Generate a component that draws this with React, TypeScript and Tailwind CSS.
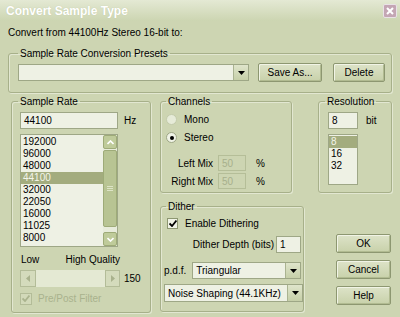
import React from "react";

const font = { fontFamily: '"Liberation Sans", Arial, sans-serif' };

function Btn({ label, className = "" }: { label: string; className?: string }) {
  return (
    <div
      className={`flex items-center justify-center rounded-[2px] border border-[#8d9771] bg-gradient-to-b from-[#dde3c8] to-[#c8d1aa] text-[10px] text-black shadow-[inset_1px_1px_0_#f1f4e6,inset_-1px_-1px_0_#b1bb91] ${className}`}
    >
      {label}
    </div>
  );
}

function DropArrow() {
  return (
    <div className="flex h-full w-[15px] items-center justify-center border-l border-[#aab391] bg-gradient-to-b from-[#dfe5cb] to-[#c6cfa8]">
      <svg width="7" height="4" viewBox="0 0 7 4">
        <path d="M0 0h7L3.5 4z" fill="#000" />
      </svg>
    </div>
  );
}

function Combo({ value, className = "" }: { value: string; className?: string }) {
  return (
    <div className={`flex items-stretch border border-[#9ea786] bg-[#eef1e4] ${className}`}>
      <div className="flex flex-1 items-center pl-[3px] text-[10px]">{value}</div>
      <DropArrow />
    </div>
  );
}

function Field({ value, className = "", disabled = false }: { value: string; className?: string; disabled?: boolean }) {
  return (
    <div
      className={`flex items-center pl-[3px] text-[10px] border ${
        disabled
          ? "border-[#b5be98] bg-[#cdd5b2] text-[#a7b08c]"
          : "border-[#9ea786] bg-[#eef1e4] text-black"
      } ${className}`}
    >
      {value}
    </div>
  );
}

function Group({
  title,
  className = "",
  legendClass = "ml-[6px]",
  innerClass = "",
  children,
}: {
  title: string;
  className?: string;
  legendClass?: string;
  innerClass?: string;
  children?: React.ReactNode;
}) {
  return (
    <fieldset
      className={`rounded-[3px] border border-[#a7b08a] shadow-[inset_1px_1px_0_#e2e7d1,1px_1px_0_#e2e7d1] ${className}`}
    >
      <legend className={`px-[2px] text-[10px] leading-[13px] ${legendClass}`}>{title}</legend>
      <div className={innerClass}>{children}</div>
    </fieldset>
  );
}

function Chevron({ up }: { up?: boolean }) {
  return (
    <div className="flex h-[14px] w-[14px] items-center justify-center rounded-[2px] border border-[#9eab78] bg-[#bfcb9a]">
      <svg width="7" height="5" viewBox="0 0 7 5">
        <path
          d={up ? "M0.5 4L3.5 1L6.5 4" : "M0.5 1L3.5 4L6.5 1"}
          stroke="#fff"
          strokeWidth="1.6"
          fill="none"
        />
      </svg>
    </div>
  );
}

export default function App() {
  const rates = ["192000", "96000", "48000", "44100", "32000", "22050", "16000", "11025", "8000"];
  return (
    <div className="flex h-[317px] w-[400px] flex-col overflow-hidden bg-[#cdd5b2] text-black" style={font}>
      {/* title bar */}
      <div className="flex h-[21px] items-center justify-between bg-gradient-to-b from-[#e4e9d4] to-[#ccd5b1] pl-[6px] pr-[3px]">
        <span className="text-[12px] font-bold text-white [text-shadow:0_0_1px_#b9c29e]">Convert Sample Type</span>
        <div className="flex h-[14px] w-[14px] items-center justify-center rounded-[2px] border border-[#e9e2e6] bg-[#c4a6b4]">
          <svg width="8" height="8" viewBox="0 0 8 8">
            <path d="M1 1L7 7M7 1L1 7" stroke="#fff" strokeWidth="2" />
          </svg>
        </div>
      </div>

      <div className="ml-[8px] mt-[6px] text-[10px] leading-[12px]">Convert from 44100Hz Stereo 16-bit to:</div>

      {/* presets */}
      <Group
        title="Sample Rate Conversion Presets"
        className="ml-[8px] mt-[8px] h-[46px] w-[384px]"
        legendClass="ml-[9px]"
        innerClass="pl-[9px]"
      >
        <div className="mt-[3px] flex items-center">
          <Combo value="" className="h-[17px] w-[231px]" />
          <Btn label="Save As..." className="ml-[9px] h-[19px] w-[64px]" />
          <Btn label="Delete" className="ml-[11px] h-[19px] w-[52px]" />
        </div>
      </Group>

      <div className="ml-[11px] mt-[2px] flex">
        {/* sample rate */}
        <Group title="Sample Rate" className="h-[218px] w-[140px]" legendClass="ml-[6px]" innerClass="pl-[8px]">
          <div className="mt-[4px] flex items-center">
            <Field value="44100" className="h-[17px] w-[98px]" />
            <span className="ml-[6px] text-[10px]">Hz</span>
          </div>
          <div className="mt-[5px] flex h-[113px] w-[98px] border border-[#9ea786] bg-[#eef1e4]">
            <div className="flex-1 overflow-hidden pt-[1px]">
              {rates.map((r) => (
                <div
                  key={r}
                  className={`h-[12px] pl-[2px] text-[10px] leading-[12px] ${
                    r === "44100" ? "bg-[#a3ac7e] text-[#f3f5ea]" : ""
                  }`}
                >
                  {r}
                </div>
              ))}
              <div className="ml-[3px] mt-[2px] flex gap-[1px]">
                <div className="h-[1px] w-[5px] bg-[#555]" />
                <div className="h-[1px] w-[5px] bg-[#555]" />
                <div className="h-[1px] w-[5px] bg-[#555]" />
                <div className="h-[1px] w-[5px] bg-[#555]" />
              </div>
            </div>
            <div className="flex w-[14px] flex-col bg-[#e8ecdb]">
              <Chevron up />
              <div className="mt-[1px] flex h-[77px] items-center justify-center rounded-[2px] border border-[#9eab78] bg-[#b8c493]">
                <div className="flex flex-col gap-[1px]">
                  <div className="h-[1px] w-[6px] bg-[#dde4c6]" />
                  <div className="h-[1px] w-[6px] bg-[#dde4c6]" />
                  <div className="h-[1px] w-[6px] bg-[#dde4c6]" />
                </div>
              </div>
              <div className="flex-1" />
              <Chevron />
            </div>
          </div>
          <div className="mt-[7px] flex w-[100px] justify-between text-[10px] leading-[12px]">
            <span className="ml-[1px]">Low</span>
            <span>High Quality</span>
          </div>
          <div className="mt-[4px] flex items-center">
            <div className="flex h-[17px] w-[100px] items-stretch bg-[#e4e9d3]">
              <div className="flex w-[16px] items-center justify-center border border-[#b3bc98] bg-[#d4dbbc]">
                <svg width="4" height="7" viewBox="0 0 4 7">
                  <path d="M4 0v7L0 3.5z" fill="#a9b28d" />
                </svg>
              </div>
              <div className="flex-1" />
              <div className="flex w-[15px] items-center justify-center border border-[#b3bc98] bg-[#d4dbbc]">
                <svg width="4" height="7" viewBox="0 0 4 7">
                  <path d="M0 0v7L4 3.5z" fill="#a9b28d" />
                </svg>
              </div>
            </div>
            <span className="ml-[4px] text-[10px]">150</span>
          </div>
          <div className="mt-[4px] flex items-center">
            <div className="flex h-[12px] w-[12px] items-center justify-center border border-[#b3bc98] bg-[#d2d9b9]">
              <svg width="8" height="7" viewBox="0 0 8 7">
                <path d="M0.5 3.5L3 6L7.5 0.5" stroke="#aab38e" strokeWidth="1.8" fill="none" />
              </svg>
            </div>
            <span className="ml-[6px] text-[10px] text-[#a9b28d]">Pre/Post Filter</span>
          </div>
        </Group>

        {/* middle column */}
        <div className="ml-[9px] flex w-[144px] flex-col">
          <Group title="Channels" className="h-[98px] w-[132px]" legendClass="ml-[5px]" innerClass="pl-[5px]">
            <div className="mt-[4px] flex items-center text-[10px]">
              <div className="h-[11px] w-[11px] rounded-full border border-[#c3cbab] bg-[#e6ebd8]" />
              <span className="ml-[7px]">Mono</span>
            </div>
            <div className="mt-[3px] flex items-center text-[10px]">
              <div className="flex h-[11px] w-[11px] items-center justify-center rounded-full border border-[#9ea786] bg-[#f0f3e6]">
                <div className="h-[4px] w-[4px] rounded-full bg-black" />
              </div>
              <span className="ml-[7px]">Stereo</span>
            </div>
            <div className="mt-[10px] flex items-center text-[10px]">
              <span className="w-[47px] text-right">Left Mix</span>
              <Field value="50" disabled className="ml-[5px] h-[16px] w-[28px]" />
              <span className="ml-[10px]">%</span>
            </div>
            <div className="mt-[2px] flex items-center text-[10px]">
              <span className="w-[47px] text-right">Right Mix</span>
              <Field value="50" disabled className="ml-[5px] h-[16px] w-[28px]" />
              <span className="ml-[10px]">%</span>
            </div>
          </Group>

          <Group title="Dither" className="mt-[7px] h-[112px] w-[144px]" legendClass="ml-[5px]" innerClass="pl-[3px]">
            <div className="ml-[3px] mt-[3px] flex items-center text-[10px]">
              <div className="flex h-[11px] w-[11px] items-center justify-center border border-[#8d9771] bg-[#f0f3e6]">
                <svg width="8" height="7" viewBox="0 0 8 7">
                  <path d="M0.5 3.5L3 6L7.5 0.5" stroke="#000" strokeWidth="1.8" fill="none" />
                </svg>
              </div>
              <span className="ml-[7px]">Enable Dithering</span>
            </div>
            <div className="mt-[5px] flex items-center justify-end pr-[2px] text-[10px]">
              <span>Dither Depth (bits)</span>
              <Field value="1" className="ml-[2px] h-[17px] w-[25px]" />
            </div>
            <div className="mt-[9px] flex items-center text-[10px]">
              <span>p.d.f.</span>
              <Combo value="Triangular" className="ml-[6px] h-[17px] w-[109px]" />
            </div>
            <Combo value="Noise Shaping (44.1KHz)" className="mt-[5px] h-[18px] w-[139px]" />
          </Group>
        </div>

        {/* right column */}
        <div className="ml-[14px] flex w-[74px] flex-col">
          <Group title="Resolution" className="h-[98px] w-[74px]" legendClass="ml-[6px]" innerClass="pl-[9px]">
            <div className="mt-[4px] flex items-center">
              <Field value="8" className="h-[17px] w-[30px]" />
              <span className="ml-[8px] text-[10px]">bit</span>
            </div>
            <div className="mt-[5px] h-[51px] w-[30px] border border-[#9ea786] bg-[#eef1e4] pt-[1px]">
              {["8", "16", "32"].map((b) => (
                <div
                  key={b}
                  className={`h-[12px] pl-[2px] text-[10px] leading-[12px] ${
                    b === "8" ? "bg-[#a3ac7e] text-[#f3f5ea]" : ""
                  }`}
                >
                  {b}
                </div>
              ))}
            </div>
          </Group>
          <div className="ml-[18px] mt-[41px] flex flex-col gap-[7px]">
            <Btn label="OK" className="h-[19px] w-[55px]" />
            <Btn label="Cancel" className="h-[19px] w-[55px]" />
            <Btn label="Help" className="h-[19px] w-[55px]" />
          </div>
        </div>
      </div>
    </div>
  );
}
